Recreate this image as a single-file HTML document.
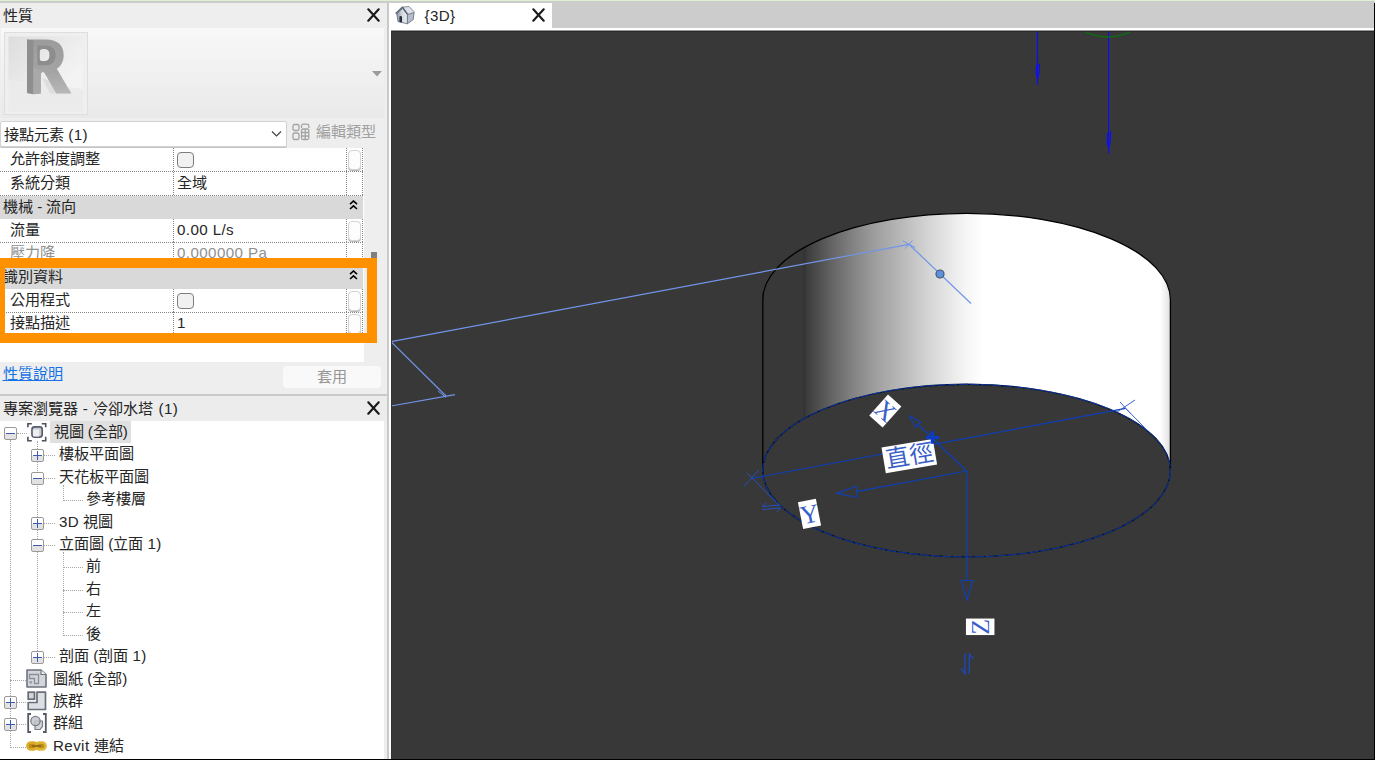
<!DOCTYPE html>
<html lang="zh-TW">
<head>
<meta charset="utf-8">
<title>Revit</title>
<style>
*{box-sizing:border-box;margin:0;padding:0}
html,body{width:1375px;height:760px;overflow:hidden;background:#cccccc}
body{font-family:"Liberation Sans",sans-serif;font-size:15.15px;color:#262626;position:relative}
.a{position:absolute}
.t{position:absolute;white-space:nowrap;line-height:20px;height:20px}
#topg{left:0;top:0;width:1375px;height:1px;background:#e1f0d2}
#topgray{left:0;top:1px;width:1375px;height:2px;background:#cccccc}
#lp{left:0;top:3px;width:387px;height:757px;background:#eeeeee}
#sep{left:387px;top:3px;width:2px;height:757px;background:#c9c9c9}
#typearea{left:1px;top:28px;width:383px;height:90px;background:linear-gradient(#f8f8f8,#e9e9e9)}
#thumb{left:4px;top:32px;width:84px;height:83px;border:1px solid #dedede;background:#efefef}
#combo{left:0;top:121px;width:287px;height:26px;background:#fff;border:1px solid #d2d2d2;border-radius:2px;box-shadow:0 1px 0 #c4c4c4}
#tbl{left:0;top:148px;width:364px;height:214px;background:#fff;overflow:hidden}
.row{position:absolute;left:0;width:363px;height:24px;border-bottom:1px dotted #858585}
.row .n{position:absolute;left:10px;top:1px;line-height:20px;white-space:nowrap}
.row .v{position:absolute;left:177px;top:1px;line-height:20px;white-space:nowrap}
.row i{position:absolute;display:block}
.row .c1{left:173px;top:0;width:0;height:23px;border-left:1px dotted #858585}
.row .c2{left:346px;top:0;width:0;height:23px;border-left:1px dotted #858585}
.row .c3{left:362px;top:0;width:0;height:23px;border-left:1px dotted #858585}
.row .b{left:348px;top:2px;width:13px;height:20px;border:1px solid #d4d4d4;border-radius:4px;background:#fdfdfd;box-shadow:0 1px 0 #b8b8b8}
.hdr{position:absolute;left:0;width:363px;height:23px;background:#d9d9d9}
.hdr .n{position:absolute;left:3px;top:1px;line-height:20px;white-space:nowrap}
.cb{left:177px;top:4px;width:17px;height:16px;border:1.5px solid #7d7d7d;border-radius:4px;background:#f1f1f1}
.dis{color:#909090}
.l{letter-spacing:.4px}
#orange{left:0;top:258px;width:377px;height:85px;border-style:solid;border-color:#ff9000;border-width:10px 10px 10px 5px}
#tabbar{left:389px;top:3px;width:986px;height:26px;background:#cccccc}
#tab{left:389px;top:3px;width:163px;height:28px;background:#fff}
#vpb{left:389px;top:28px;width:986px;height:732px;background:#fff}
#vp{left:391px;top:31px;width:983px;height:728px;background:#383838;overflow:hidden}
#pbline{left:0;top:394px;width:387px;height:2px;background:#c9c9c9}
#pbtitle{left:0;top:396px;width:387px;height:25px;background:#ececec}
#tree{left:0;top:421px;width:384px;height:338px;background:#fff;overflow:hidden}
#botline{left:0;top:759px;width:1375px;height:1px;background:#000}
#rline{left:1374px;top:3px;width:1px;height:757px;background:#000}
.tr{position:absolute;left:0;height:22px;white-space:nowrap;line-height:20px}
.bx{position:absolute;width:13px;height:13px;border:1px solid #9a9a9a;border-radius:2px;background:linear-gradient(#fff 55%,#e2e2e2 56%)}
.bx:before{content:"";position:absolute;left:1px;top:5px;width:9px;height:1px;background:#3f58b0}
.bx.p:after{content:"";position:absolute;left:5px;top:1px;width:1px;height:9px;background:#3f58b0}
.dh{position:absolute;height:0;border-top:1px dotted #a6a6a6}
.dv{position:absolute;width:0;border-left:1px dotted #a6a6a6}
</style>
</head>
<body>
<div class="a" id="topg"></div>
<div class="a" id="topgray"></div>
<div class="a" id="lp"></div>
<div class="a" id="sep"></div>
<div class="t" style="left:2.5px;top:6px">性質</div>
<svg class="a" style="left:367.3px;top:7.7px" width="13" height="14" viewBox="0 0 13 14"><path d="M1.3 1.3L11.7 12.7M11.7 1.3L1.3 12.7" stroke="#1a1a1a" stroke-width="2.1" stroke-linecap="round" fill="none"/></svg>
<div class="a" id="typearea"></div>
<div class="a" id="thumb"></div>
<svg class="a" style="left:5px;top:33px" width="82" height="81" viewBox="5 33 82 81">
<defs><linearGradient id="rb" x1="0" y1="0" x2="1" y2="0.6"><stop offset="0" stop-color="#dddddd"/><stop offset="0.7" stop-color="#ededed"/><stop offset="1" stop-color="#f3f3f3"/></linearGradient>
<linearGradient id="rf" x1="0" y1="0" x2="0" y2="1"><stop offset="0" stop-color="#9c9c9c"/><stop offset="0.6" stop-color="#a4a4a4"/><stop offset="1" stop-color="#b8b8b8"/></linearGradient></defs>
<rect x="8.5" y="36.5" width="74.5" height="75" fill="#ebebeb"/>
<path d="M8.5 36.5H83V89L8.5 80Z" fill="url(#rb)"/>
<filter id="bl" x="-10%" y="-10%" width="120%" height="120%"><feGaussianBlur stdDeviation="0.45"/></filter><g filter="url(#bl)"><path d="M42 78L60 84L71.4 93.4H50Z" fill="#dedede"/>
<path d="M27 39.6H46C58 39.6 63.7 46 63.7 55C63.7 62 60.5 66.5 56.8 68.8L71.4 93.4H56.2L44.8 73.5C43.6 71.6 42.3 71.6 40.8 73.5V93.4L33.5 94.3L27 93Z M39.6 52C39.6 50 40.6 49 42.4 49H45C48.5 49 49.6 51.8 49.6 55C49.6 58.5 48.3 61.2 44.5 61.2H42.4C40.6 61.2 39.6 60.2 39.6 58.2Z" fill="url(#rf)" fill-rule="evenodd"/>
<path d="M37.2 45.6H46C52.8 45.6 55.6 50 55.6 55C55.6 60.5 52.8 65.2 46 65.2H37.6Z M39.6 52C39.6 50 40.6 49 42.4 49H45C48.5 49 49.6 51.8 49.6 55C49.6 58.5 48.3 61.2 44.5 61.2H42.4C40.6 61.2 39.6 60.2 39.6 58.2Z" fill="#8d8d8d" fill-rule="evenodd"/>
<path d="M27 39.6L33.4 40.6V94.3L27 93Z" fill="#8e8e8e"/>
<path d="M33.4 66C36 70 40 71 44 70.5L40.8 73.5V93.4L33.5 94.3Z" fill="#a9a9a9"/></g>
</svg>
<svg class="a" style="left:371.7px;top:71px" width="10" height="6" viewBox="0 0 10 6"><path d="M0 0H10L5 5.6Z" fill="#9b9b9b"/></svg>
<div class="a" id="combo"></div>
<div class="t" style="left:4px;top:125px">接點元素 <span class="l">(1)</span></div>
<svg class="a" style="left:271px;top:130px" width="11" height="8" viewBox="0 0 11 8"><path d="M1 1.5L5.5 6L10 1.5" stroke="#444" stroke-width="1.2" fill="none"/></svg>
<svg class="a" style="left:292px;top:123px" width="18" height="18" viewBox="0 0 18 18" fill="none" stroke="#a3a3a3" stroke-width="1.3">
<rect x="1" y="1.5" width="6" height="6" rx="1.5"/><rect x="1" y="10" width="6" height="6.5" rx="1.5"/>
<path d="M9.5 5V3C9.5 2 10.2 1.2 11.2 1.2H15C16 1.2 16.8 2 16.8 3V5"/>
<rect x="9.5" y="6" width="7.3" height="10.5" rx="1.5"/><path d="M9.5 9.5H16.8M9.5 13H16.8M13.2 6V16.5"/></svg>
<div class="t" style="left:316px;top:122px;color:#a0a0a0">編輯類型</div>
<div class="a" id="tbl"><div class="row" style="top:0px"><span class="n">允許斜度調整</span><i class="cb"></i><i class="c1"></i><i class="c2"></i><i class="c3"></i><i class="b"></i></div><div class="row" style="top:24px"><span class="n">系統分類</span><span class="v">全域</span><i class="c1"></i><i class="c2"></i><i class="c3"></i></div><div class="hdr" style="top:48px"><span class="n">機械 - 流向</span><svg class="a" style="left:349px;top:4px" width="9" height="10" viewBox="0 0 9 10"><path d="M1 4.2L4.5 1L8 4.2M1 9L4.5 5.8L8 9" stroke="#000" stroke-width="1.6" fill="none"/></svg></div><div class="row" style="top:71px"><span class="n">流量</span><span class="v"><span class="l">0.00 L/s</span></span><i class="c1"></i><i class="c2"></i><i class="c3"></i><i class="b"></i></div><div class="row" style="top:94px"><span class="n dis">壓力降</span><span class="v dis"><span class="l">0.000000 Pa</span></span><i class="c1"></i><i class="c2"></i><i class="c3"></i></div><div class="hdr" style="top:118px"><span class="n">識別資料</span><svg class="a" style="left:349px;top:4px" width="9" height="10" viewBox="0 0 9 10"><path d="M1 4.2L4.5 1L8 4.2M1 9L4.5 5.8L8 9" stroke="#000" stroke-width="1.6" fill="none"/></svg></div><div class="row" style="top:141px"><span class="n">公用程式</span><i class="cb"></i><i class="c1"></i><i class="c2"></i><i class="c3"></i><i class="b"></i></div><div class="row" style="top:164px"><span class="n">接點描述</span><span class="v"><span class="l">1</span></span><i class="c1"></i><i class="c2"></i><i class="c3"></i><i class="b"></i></div></div>
<div class="a" style="left:371px;top:252px;width:6px;height:7px;background:#808080"></div>
<div class="a" id="orange"></div>
<div class="t" style="left:2.5px;top:364px;color:#1673e6;text-decoration:underline">性質說明</div>
<div class="a" style="left:283px;top:366px;width:98px;height:22px;background:#f9f9f9;border-radius:4px"></div>
<div class="t" style="left:317px;top:367px;color:#969696">套用</div>
<div class="a" id="pbline"></div>
<div class="a" id="pbtitle"></div>
<div class="t" style="left:2.5px;top:398.6px;word-spacing:1px">專案瀏覽器 <span class="l">-</span> 冷卻水塔 <span class="l">(1)</span></div>
<svg class="a" style="left:367.3px;top:400.7px" width="13" height="14" viewBox="0 0 13 14"><path d="M1.3 1.3L11.7 12.7M11.7 1.3L1.3 12.7" stroke="#1a1a1a" stroke-width="2.1" stroke-linecap="round" fill="none"/></svg>
<div class="a" id="tree"><i class="dv" style="left:10px;top:19.0px;height:307.5px"></i><i class="dv" style="left:37px;top:20.0px;height:210.0px"></i><i class="dv" style="left:63px;top:64.0px;height:15.5px"></i><i class="dv" style="left:63px;top:131.0px;height:83.5px"></i><i class="dh" style="left:17px;top:12.0px;width:10px"></i><i class="bx" style="left:4px;top:6.0px"></i><svg class="a" style="left:27px;top:0.8px" width="20" height="20" viewBox="0 0 20 20"><path d="M0.9 5.2V1.7H4.8M14.8 1.7H18.7V5.2M18.7 14.8V18.8H14.8M4.8 18.8H0.9V14.8" stroke="#4c515d" stroke-width="1.6" fill="none"/><rect x="5" y="4.8" width="10.2" height="10.4" rx="2.6" fill="#c8ccd4" stroke="#575c69" stroke-width="1.7"/><path d="M5.9 8.3Q5.9 7.6 6.6 7.6H12.2V14.4H6.8Q5.9 14.4 5.9 13.6Z" fill="#eceef2"/></svg><div class="tr" style="left:50px;top:0.2px;height:21.6px;background:#e0e0e0;padding:0 3px 0 3.5px;line-height:21.6px">視圖 (全部)</div><i class="dh" style="left:44px;top:34.0px;width:11px"></i><i class="bx p" style="left:31px;top:28.0px"></i><div class="tr" style="left:59px;top:23.0px">樓板平面圖</div><i class="dh" style="left:44px;top:57.0px;width:11px"></i><i class="bx" style="left:31px;top:51.0px"></i><div class="tr" style="left:59px;top:46.0px">天花板平面圖</div><i class="dh" style="left:44px;top:102.0px;width:11px"></i><i class="bx p" style="left:31px;top:96.0px"></i><div class="tr" style="left:59px;top:91.0px"><span class="l">3D</span> 視圖</div><i class="dh" style="left:44px;top:124.0px;width:11px"></i><i class="bx" style="left:31px;top:118.0px"></i><div class="tr" style="left:59px;top:113.0px">立面圖 (立面 <span class="l">1)</span></div><i class="dh" style="left:44px;top:236.0px;width:11px"></i><i class="bx p" style="left:31px;top:230.0px"></i><div class="tr" style="left:59px;top:225.0px">剖面 (剖面 <span class="l">1)</span></div><i class="dh" style="left:63px;top:79.0px;width:20px"></i><div class="tr" style="left:86px;top:68.0px">參考樓層</div><i class="dh" style="left:63px;top:146.0px;width:20px"></i><div class="tr" style="left:86px;top:135.0px">前</div><i class="dh" style="left:63px;top:169.0px;width:20px"></i><div class="tr" style="left:86px;top:158.0px">右</div><i class="dh" style="left:63px;top:191.0px;width:20px"></i><div class="tr" style="left:86px;top:180.0px">左</div><i class="dh" style="left:63px;top:214.0px;width:20px"></i><div class="tr" style="left:86px;top:203.0px">後</div><i class="dh" style="left:10px;top:259.0px;width:16px"></i><svg class="a" style="left:25px;top:247.7px" width="22" height="19" viewBox="0 0 22 19"><path d="M2 1H16L21 5.5V18H2Z" fill="#d3d6db" stroke="#6e737c" stroke-width="1.6" stroke-linejoin="round"/><path d="M16 1V5.5H21" fill="#f4f4f4" stroke="#6e737c" stroke-width="1.2"/><path d="M4.5 9.5V5.5H13.5V14.5H9.5V9.5Z" fill="none" stroke="#8a8f98" stroke-width="1.3"/><rect x="4.5" y="12" width="2.6" height="2.6" fill="#9aa0a8"/></svg><div class="tr" style="left:53px;top:248.0px">圖紙 (全部)</div><i class="dh" style="left:17px;top:281.0px;width:9px"></i><i class="bx p" style="left:4px;top:275.0px"></i><svg class="a" style="left:27px;top:270.2px" width="20" height="20" viewBox="0 0 20 20"><path d="M1.2 18.5V11.5H10V1.2H18.5V18.5Z" fill="#dcdfe4" stroke="#6a6f78" stroke-width="1.7" stroke-linejoin="round"/><rect x="1.2" y="1.2" width="6.3" height="7" fill="#d2d5db" stroke="#666b74" stroke-width="1.7"/></svg><div class="tr" style="left:53px;top:270.0px">族群</div><i class="dh" style="left:17px;top:303.0px;width:9px"></i><i class="bx p" style="left:4px;top:297.0px"></i><svg class="a" style="left:27px;top:292.4px" width="20" height="20" viewBox="0 0 20 20"><path d="M4 1H1.2V19H4M16 1H18.8V19H16" fill="none" stroke="#555a63" stroke-width="1.8"/><path d="M8 8H15.5V13.5L13 16.5H8Z" fill="#d4d6da" stroke="#7a7f88" stroke-width="1.2"/><circle cx="8.5" cy="8" r="4.6" fill="#c3c6cc" fill-opacity=".85" stroke="#7a7f88" stroke-width="1.3"/></svg><div class="tr" style="left:53px;top:292.0px">群組</div><i class="dh" style="left:10px;top:326.0px;width:16px"></i><svg class="a" style="left:26px;top:320.4px" width="21" height="10" viewBox="0 0 21 10"><rect x="1.4" y="1.4" width="9.6" height="7.2" rx="3.6" fill="#b98d1c" stroke="#dcae2c" stroke-width="2.5"/><rect x="10" y="1.4" width="9.6" height="7.2" rx="3.6" fill="#b98d1c" stroke="#e2b636" stroke-width="2.5"/><rect x="8.6" y="2.6" width="3.8" height="4.8" fill="#dcae2c"/><rect x="6" y="4.1" width="9" height="1.8" fill="#8f6c12"/></svg><div class="tr" style="left:53px;top:315.0px"><span class="l">Revit</span> 連結</div></div>
<div class="a" id="tabbar"></div>
<div class="a" id="vpb"></div>
<div class="a" id="tab"></div>
<svg class="a" style="left:395px;top:6px" width="20" height="19" viewBox="0 0 20 19">
<defs><linearGradient id="hw" x1="0" y1="0" x2="1" y2="0"><stop offset="0" stop-color="#8a93a3"/><stop offset="0.45" stop-color="#cfd4dc"/><stop offset="1" stop-color="#f1f3f6"/></linearGradient></defs>
<path d="M1.8 7.8L7.6 2.4L12.4 8.2V17.8L3 15.6Z" fill="url(#hw)" stroke="#6f7888" stroke-width="0.9" stroke-linejoin="round"/>
<path d="M12.4 8.2L19 6.6L18.3 13.6L12.4 17.8Z" fill="#b4bcc9" stroke="#6f7888" stroke-width="0.9" stroke-linejoin="round"/>
<path d="M7.4 1.2L14 0.5L19.7 6.3L12.6 8.4Z" fill="#dde2e9" stroke="#7b8494" stroke-width="0.9" stroke-linejoin="round"/>
<path d="M0.7 7.6L7.4 1.2L12.6 8.4" fill="none" stroke="#5d6676" stroke-width="1.5" stroke-linejoin="round"/>
<path d="M4.4 15.9V11.2C4.4 9.6 7 9.8 7 11.4V16.5Z" fill="#2a3240"/>
</svg>
<div class="t l" style="left:424.5px;top:6px">{3D}</div>
<svg class="a" style="left:532.3px;top:7.7px" width="13" height="14" viewBox="0 0 13 14"><path d="M1.3 1.3L11.7 12.7M11.7 1.3L1.3 12.7" stroke="#1a1a1a" stroke-width="2.1" stroke-linecap="round" fill="none"/></svg>
<div class="a" style="left:391px;top:30px;width:983px;height:1px;background:#9a9a9a"></div><div class="a" style="left:391px;top:31px;width:983px;height:1px;background:#2a2a2a;z-index:3"></div><div class="a" style="left:391px;top:31px;width:1px;height:728px;background:#333;z-index:3"></div>
<div class="a" id="vp"><svg class="a" style="left:0;top:0" width="984" height="728" viewBox="391 31 984 728"><defs>
<linearGradient id="cg" gradientUnits="userSpaceOnUse" x1="762.8" y1="0" x2="1170.4" y2="0">
<stop offset="0" stop-color="#383838"/>
<stop offset="0.098" stop-color="#383838"/>
<stop offset="0.101" stop-color="#323232"/>
<stop offset="0.108" stop-color="#3c3c3c"/>
<stop offset="0.16" stop-color="#5e5e5e"/>
<stop offset="0.22" stop-color="#828282"/>
<stop offset="0.28" stop-color="#a0a0a0"/>
<stop offset="0.34" stop-color="#b8b8b8"/>
<stop offset="0.40" stop-color="#d2d2d2"/>
<stop offset="0.46" stop-color="#e8e8e8"/>
<stop offset="0.50" stop-color="#f6f6f6"/>
<stop offset="0.54" stop-color="#ffffff"/>
<stop offset="0.975" stop-color="#ffffff"/>
<stop offset="0.99" stop-color="#ededed"/>
<stop offset="1" stop-color="#dcdcdc"/>
</linearGradient></defs><path d="M762.8 299.6 A203.8 86.3 0 0 1 1170.4 299.6 L1170.4 470.6 A203.8 86.3 0 0 0 762.8 470.6 Z" fill="url(#cg)"/><path d="M762.8 470.6 L762.8 299.6 A203.8 86.3 0 0 1 1170.4 299.6 L1170.4 470.6" fill="none" stroke="#000" stroke-width="1.3"/><ellipse cx="966.6" cy="470.6" rx="203.8" ry="86.3" fill="none" stroke="#04102e" stroke-width="1.4"/><ellipse cx="966.6" cy="470.6" rx="203.8" ry="86.3" fill="none" stroke="#0d3cb0" stroke-width="0.9" stroke-dasharray="9 2"/><path d="M391 341.7L909 244.3M909 244.3L971 303.5M391 341.7L446 396M391 406L455 394.7" stroke="#7195e8" stroke-width="1.2" fill="none"/><path d="M903 241L915 247.5M905 248.5L912.5 240.5" stroke="#7195e8" stroke-width="1" fill="none"/><path d="M438 391L446 397.5" stroke="#7195e8" stroke-width="1" fill="none"/><circle cx="940" cy="274" r="4" fill="#5b92de" stroke="#4a5568" stroke-width="1.2"/><path d="M751.5 478.5L1125.6 408.4" stroke="#0f3fb8" stroke-width="1.15" fill="none"/><path d="M1125.6 408.4L1148 431M1117 412L1135 400M1120 402L1131 414" stroke="#3d66d0" stroke-width="1" fill="none"/><path d="M744 486.7L758.7 470M747 472.9L780.5 506.4" stroke="#2450c0" stroke-width="1" fill="none"/><path d="M966.8 471L966.8 580.5M961.3 580.5H972.7L966.9 600Z" stroke="#0f3fb8" stroke-width="1.15" fill="none"/><path d="M966.6 471L918 424.5M909.5 415.8L920.8 422L915.6 427.2Z" stroke="#0f3fb8" stroke-width="1.15" fill="none" stroke-linejoin="round"/><path d="M966.6 471L856.5 491.6M856.6 486.2V497.3L836.6 493.4Z" stroke="#0f3fb8" stroke-width="1.15" fill="none" stroke-linejoin="round"/><path d="M762 506.5L780 505M762 506.5L766 503M762 509.5L780 508M780 508L777 512" stroke="#2450c0" stroke-width="1" fill="none"/><g transform="translate(909.3 456.1) rotate(-9.6)"><rect x="-26.0" y="-13.0" width="52" height="26" fill="#fff"/><text x="0" y="8.5" text-anchor="middle" font-family="Liberation Serif,serif" font-size="24" fill="#2049c2" fill-opacity=".88" >直徑</text></g><g transform="translate(885.3 411.0) rotate(42)"><rect x="-9.0" y="-14.0" width="18" height="28" fill="#fff"/><text x="0" y="8.6" text-anchor="middle" font-family="Liberation Serif,serif" font-size="26" fill="#2049c2" fill-opacity=".88" >X</text></g><g transform="translate(809.5 513.9) rotate(-11)"><rect x="-9.15" y="-13.65" width="18.3" height="27.3" fill="#fff"/><text x="0" y="9" text-anchor="middle" font-family="Liberation Serif,serif" font-size="26" fill="#2049c2" fill-opacity=".88" >Y</text></g><g transform="translate(980.2 626.8) rotate(-90)"><rect x="-8.25" y="-14.25" width="16.5" height="28.5" fill="#fff"/><text x="0" y="8.6" text-anchor="middle" font-family="Liberation Serif,serif" font-size="26" fill="#2049c2" fill-opacity=".88" >Z</text></g><path d="M925.8 437.6H939M932.4 431V443.8" stroke="#0a3cc8" stroke-width="3.4" fill="none"/><path d="M965 653.5V673.5L961 668.5M969.3 674V654L973.5 659" stroke="#1d49c0" stroke-width="1.3" fill="none"/><path d="M1037.5 31V85M1108.6 31V153.5" stroke="#0c0cff" stroke-width="1.15" fill="none"/><path d="M1037.5 80L1036 72L1036.6 65.5L1039.6 64L1039.2 72Z M1108.6 149L1107 141L1107.6 133.5L1110.6 132L1110.2 141Z" stroke="#0c0cff" stroke-width="1" fill="none"/><path d="M1081 30Q1108 44 1134 30" stroke="#0b6e14" stroke-width="1.3" fill="none"/></svg></div>
<div class="a" id="botline"></div>
<div class="a" id="rline"></div>
</body>
</html>
